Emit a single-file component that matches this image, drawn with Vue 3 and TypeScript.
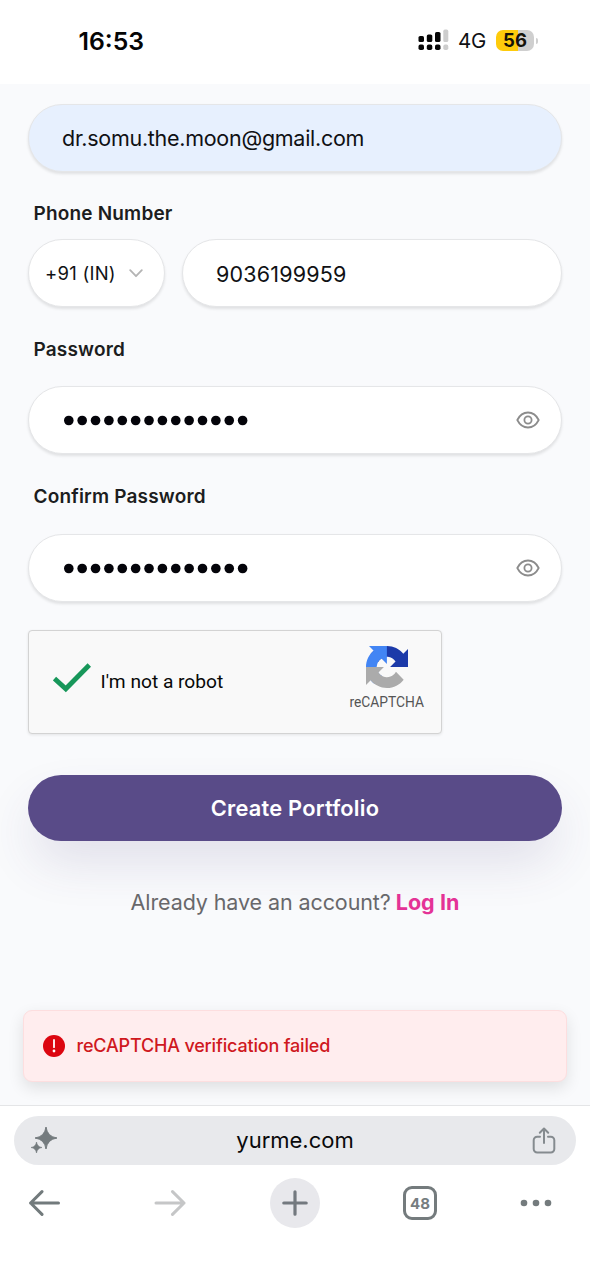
<script setup lang="ts">
import { ref } from 'vue'

const email = ref<string>('dr.somu.the.moon@gmail.com')
const phone = ref<string>('9036199959')
const passwords: { id: string; label: string; length: number }[] = [
  { id: 'password', label: 'Password', length: 14 },
  { id: 'confirm', label: 'Confirm Password', length: 14 },
]
</script>

<template>
  <div class="screen">
    <header class="status">
      <span class="time">16:53</span>
      <div class="indicators">
        <svg class="signal" width="32" height="22" viewBox="0 0 32 22">
          <g fill="#050505">
            <rect x="0.5" y="8" width="5.5" height="6" rx="1.6" />
            <rect x="8.8" y="6.4" width="5.5" height="7.6" rx="1.6" />
            <rect x="17" y="4" width="5.5" height="10" rx="1.6" />
            <rect x="0.5" y="16.6" width="5.5" height="5.4" rx="1.8" />
            <rect x="8.8" y="16.6" width="5.5" height="5.4" rx="1.8" />
            <rect x="17" y="16.6" width="5.5" height="5.4" rx="1.8" />
          </g>
          <g fill="#cdcdcd">
            <rect x="25.3" y="1.6" width="5" height="12.4" rx="1.6" />
            <rect x="25.3" y="16.6" width="5" height="5.4" rx="1.8" />
          </g>
        </svg>
        <span class="network">4G</span>
        <span class="battery">56</span>
        <i class="nub"></i>
      </div>
    </header>

    <main class="page">
      <div class="field autofill"><span class="value email">{{ email }}</span></div>

      <label class="label phone-label">Phone Number</label>
      <div class="phone-row">
        <div class="field country">
          <span>+91 (IN)</span>
          <svg width="14" height="9" viewBox="0 0 14 9" fill="none" stroke="#b4b4b4" stroke-width="1.8" stroke-linecap="round" stroke-linejoin="round">
            <path d="M1.2 1.2 7 7.2l5.8-6" />
          </svg>
        </div>
        <div class="field number"><span class="value digits">{{ phone }}</span></div>
      </div>

      <section v-for="p in passwords" :key="p.id" :class="['secret', p.id]">
        <label class="label">{{ p.label }}</label>
        <div class="field">
          <svg class="dots" width="190" height="12" viewBox="0 0 190 12" fill="#04040a">
            <circle v-for="n in p.length" :key="n" :cx="5.8 + (n - 1) * 13.37" cy="6.5" r="4.8" />
          </svg>
          <svg class="eye" width="24" height="18" viewBox="0 0 24 18" fill="none" stroke="#8c8c8c" stroke-width="1.8">
            <path d="M1.3 9C3.7 4.2 7.3 1.5 12 1.5S20.3 4.2 22.7 9C20.3 13.8 16.7 16.5 12 16.5S3.7 13.8 1.3 9Z" stroke-linejoin="round" />
            <circle cx="12" cy="9" r="3.6" />
          </svg>
        </div>
      </section>

      <div class="captcha">
        <svg class="tick" width="38" height="30" viewBox="0 0 38 30" fill="none" stroke="#17975a" stroke-width="4.8">
          <path d="M1.5 15.5 12.8 25.8 36.3 2" />
        </svg>
        <span class="robot">I'm not a robot</span>
        <div class="brand">
          <svg width="42" height="42" viewBox="0 0 64 64">
            <path fill="#1c3aa9" d="M64 31.955l-.016-1.37V4.687l-7.16 7.16C50.964 4.674 42.033.093 32.05.093c-10.39 0-19.62 4.96-25.458 12.64l11.736 11.86a15.55 15.55 0 0 1 4.754-5.334c2.05-1.6 4.952-2.906 8.968-2.906.485 0 .86.057 1.135.163 4.976.393 9.288 3.14 11.828 7.124l-8.307 8.307L64 31.953" />
            <path fill="#4285f4" d="M31.862.094l-1.37.016H4.594l7.16 7.16C4.58 13.13 0 22.06 0 32.045c0 10.39 4.96 19.62 12.64 25.458L24.5 45.767a15.55 15.55 0 0 1-5.334-4.754c-1.6-2.05-2.906-4.952-2.906-8.968 0-.485.057-.86.163-1.135.393-4.976 3.14-9.288 7.124-11.828l8.307 8.307L31.86.095" />
            <path fill="#ababab" d="M.001 32.045l.016 1.37v25.898l7.16-7.16c5.86 7.173 14.79 11.754 24.774 11.754 10.39 0 19.62-4.96 25.458-12.64L45.673 39.407a15.55 15.55 0 0 1-4.754 5.334c-2.05 1.6-4.952 2.906-8.968 2.906-.485 0-.86-.057-1.135-.163-4.976-.393-9.288-3.14-11.828-7.124l8.307-8.307L.001 32.047" />
          </svg>
          <span>reCAPTCHA</span>
        </div>
      </div>

      <button class="submit" type="button">Create Portfolio</button>

      <p class="login"><span>Already have an account?</span><a>Log In</a></p>

      <div class="toast" role="alert">
        <svg width="22" height="22" viewBox="0 0 22 22">
          <circle cx="11" cy="11" r="11" fill="#dc0610" />
          <path d="M11 5v7.2" stroke="#fff" stroke-width="1.8" stroke-linecap="round" />
          <circle cx="11" cy="16" r="1.4" fill="#fff" />
        </svg>
        <span>reCAPTCHA verification failed</span>
      </div>
    </main>

    <footer class="browser">
      <div class="urlbar">
        <svg class="spark" width="28" height="28" viewBox="0 0 28 28" fill="#747b7e">
          <path d="M16 1Q17.3 10.7 27 12 17.3 13.3 16 23 14.7 13.3 5 12 14.7 10.7 16 1Z" stroke="#747b7e" stroke-linejoin="round" />
          <path d="M6.5 16Q7.2 20.8 12 21.5 7.2 22.2 6.5 27 5.8 22.2 1 21.5 5.8 20.8 6.5 16Z" stroke="#747b7e" stroke-width=".6" />
        </svg>
        <span class="domain">yurme.com</span>
        <svg class="share" width="24" height="27" viewBox="0 0 24 27" fill="none" stroke="#858b8f" stroke-width="2" stroke-linecap="round" stroke-linejoin="round">
          <path d="M8 9.7H5.2A3.5 3.5 0 0 0 1.7 13.2v8.8A3.5 3.5 0 0 0 5.2 25.5h13.6a3.5 3.5 0 0 0 3.5-3.5v-8.8a3.5 3.5 0 0 0-3.5-3.5H16M12 16V1.8M7.8 5.7 12 1.5l4.2 4.2" />
        </svg>
      </div>
      <nav class="nav">
        <svg width="32" height="28" viewBox="0 0 32 28" fill="none" stroke="#727a7c" stroke-width="3" stroke-linecap="round" stroke-linejoin="round">
          <path d="M29.5 14H1.6M13 2.6 1.6 14 13 25.4" />
        </svg>
        <svg width="32" height="28" viewBox="0 0 32 28" fill="none" stroke="#c5c6c7" stroke-width="3" stroke-linecap="round" stroke-linejoin="round">
          <path d="M2 14h28M18.5 2.6 30 14 18.5 25.4" />
        </svg>
        <div class="new-tab">
          <svg width="26" height="26" viewBox="0 0 26 26" fill="none" stroke="#73797f" stroke-width="3.2" stroke-linecap="round"><path d="M13 1.8v22.4M1.8 13h22.4" /></svg>
        </div>
        <div class="tabs">48</div>
        <svg class="more" width="32" height="8" viewBox="0 0 32 8" fill="#747b7d">
          <circle cx="4" cy="4" r="3.3" /><circle cx="16" cy="4" r="3.3" /><circle cx="28" cy="4" r="3.3" />
        </svg>
      </nav>
    </footer>
  </div>
</template>

<style>
body { background: #fff; }
</style>

<style scoped>
* { box-sizing: border-box; }
.screen {
  width: 590px; height: 1280px; overflow: hidden;
  display: flex; flex-direction: column;
  background: #fff; color: #101114;
  font-family: Inter, "Liberation Sans", sans-serif;
  white-space: nowrap;
}
.status { height: 84px; flex: none; display: flex; justify-content: space-between; padding: 26px 52px 0 78.5px; }
.time { font-size: 24.8px; line-height: 30px; font-weight: 600; color: #050505; }
.indicators { height: 30px; display: flex; align-items: center; }
.signal { margin: -4px 8px 0 0; }
.network { width: 38px; font-size: 20.5px; line-height: 30px; letter-spacing: -.3px; }
.battery {
  width: 38px; height: 21px; border-radius: 7px; margin-top: -2px;
  background: linear-gradient(90deg, #fecb0b 57%, #cfcfcf 57%);
  font-size: 18.5px; line-height: 21px; font-weight: 700; text-align: center; color: #161308;
}
.nub { width: 2px; height: 6px; margin: -1px 0 0 2px; border-radius: 0 2px 2px 0; background: #cfcfcf; }

.page { height: 1021px; flex: none; display: flex; flex-direction: column; padding: 20px 28px 0; background: #f9fafc; overflow: hidden; }
.field {
  height: 68px; flex: none; display: flex; align-items: center;
  padding-left: 33px; border: 1px solid #e5e6e8; border-radius: 34px;
  background: #fff; box-shadow: 0 2px 3px rgba(0, 0, 0, .1);
}
.autofill { background: #e7f0fe; }
.value { font-size: 21.5px; line-height: 30px; }
.email { letter-spacing: -.28px; }
.digits { padding-top: 1px; letter-spacing: .2px; }
.label { display: block; padding-left: 5.5px; font-size: 19px; line-height: 26px; font-weight: 600; letter-spacing: .18px; color: #1c1d20; }
.phone-label { margin-top: 29px; }
.phone-row { display: flex; gap: 17px; margin-top: 12px; }
.country { width: 137px; padding: 0 21px 0 16px; justify-content: space-between; font-size: 18.5px; letter-spacing: .25px; }
.number { flex: 1; }
.secret { margin-top: 30px; }
.secret .field { justify-content: space-between; margin-top: 23px; padding-right: 21px; }
.secret.confirm { margin-top: 30px; }
.secret.confirm .field { margin-top: 23.5px; }
.dots { margin-left: 1px; }

.captcha {
  width: 414px; height: 104px; flex: none; margin-top: 28px;
  display: flex; padding: 0 17px 0 23.5px;
  border: 1.5px solid #d3d3d3; border-radius: 4px; background: #f9f9f9; box-shadow: 0 1px 3px rgba(0, 0, 0, .09);
}
.tick { margin-top: 32px; }
.robot { margin: 38px 0 0 10px; font: 19.2px/26px Roboto, sans-serif; letter-spacing: -.02px; color: #080808; }
.brand { margin: 15px 0 0 auto; display: flex; flex-direction: column; align-items: center; font: 13.8px/20px Roboto, sans-serif; color: #555; }
.brand span { margin-top: 4px; }

.submit {
  height: 66px; flex: none; margin-top: 41px; padding: 0; border: 0; border-radius: 33px;
  background: #594b88; color: #fff; font: 600 21.8px/66px Inter, sans-serif; letter-spacing: .22px;
  box-shadow: 0 24px 50px -4px rgba(72, 57, 119, .14);
}
.login { display: flex; justify-content: center; gap: 5px; margin: 46px 0 0; font-size: 21.5px; line-height: 30px; letter-spacing: -.1px; color: #68686b; }
.login a { font-weight: 700; letter-spacing: .05px; color: #e43396; }
.toast {
  height: 72px; flex: none; margin: 93px -5px 0; padding-left: 18.5px;
  display: flex; align-items: center; gap: 12px;
  border: 1px solid #fddedf; border-radius: 9px; background: #ffedee; color: #cf1820; font-size: 18px; font-weight: 500; letter-spacing: -.18px;
  box-shadow: 0 6px 16px rgba(0, 0, 0, .11);
}

.browser { height: 175px; flex: none; padding: 10px 14px 0; border-top: 1.5px solid #e4e5e7; background: #fff; }
.urlbar { height: 49px; display: flex; align-items: center; justify-content: space-between; padding: 0 20px 0 16px; border-radius: 25px; background: #e8e9ec; }
.spark { margin-top: -2px; }
.domain { margin-top: -2px; font-size: 22px; color: #09090b; }
.nav {
  height: 50px; margin: 13px 0 0 6px;
  display: grid; grid-template-columns: 50px 50px 50px 50px 32px; column-gap: 75px;
  align-items: center; justify-items: center;
}
.new-tab { width: 50px; height: 50px; border-radius: 50%; background: #e8e8ec; display: grid; place-items: center; }
.tabs { width: 34px; height: 34px; border: 3px solid #747b7d; border-radius: 9px; font-size: 15px; line-height: 29px; font-weight: 700; text-align: center; color: #767d80; }
</style>
